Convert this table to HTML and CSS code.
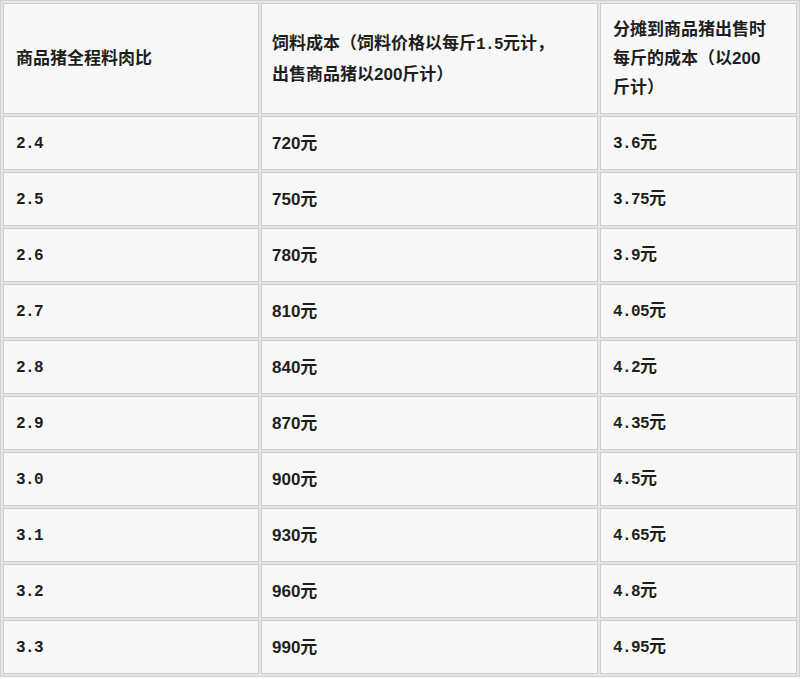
FILE: index.html
```html
<!DOCTYPE html>
<html lang="zh-CN">
<head>
<meta charset="utf-8">
<title>商品猪全程料肉比</title>
<link rel="stylesheet" href="styles.css">
</head>
<body>
<table class="cost-table">
  <colgroup>
    <col class="col-ratio">
    <col class="col-feed">
    <col class="col-unit">
  </colgroup>
  <thead>
    <tr class="head-row">
      <th class="c1">商品猪全程料肉比</th>
      <th class="c2">饲料成本（饲料价格以每斤<span class="num">1.5</span>元计，<br>出售商品猪以200斤计）</th>
      <th class="c3">分摊到商品猪出售时<br>每斤的成本（以200<br>斤计）</th>
    </tr>
  </thead>
  <tbody>
    <tr><td class="c1"><span class="num">2.4</span></td><td class="c2">720元</td><td class="c3"><span class="num">3.6</span>元</td></tr>
    <tr><td class="c1"><span class="num">2.5</span></td><td class="c2">750元</td><td class="c3"><span class="num">3.75</span>元</td></tr>
    <tr><td class="c1"><span class="num">2.6</span></td><td class="c2">780元</td><td class="c3"><span class="num">3.9</span>元</td></tr>
    <tr><td class="c1"><span class="num">2.7</span></td><td class="c2">810元</td><td class="c3"><span class="num">4.05</span>元</td></tr>
    <tr><td class="c1"><span class="num">2.8</span></td><td class="c2">840元</td><td class="c3"><span class="num">4.2</span>元</td></tr>
    <tr><td class="c1"><span class="num">2.9</span></td><td class="c2">870元</td><td class="c3"><span class="num">4.35</span>元</td></tr>
    <tr><td class="c1"><span class="num">3.0</span></td><td class="c2">900元</td><td class="c3"><span class="num">4.5</span>元</td></tr>
    <tr><td class="c1"><span class="num">3.1</span></td><td class="c2">930元</td><td class="c3"><span class="num">4.65</span>元</td></tr>
    <tr><td class="c1"><span class="num">3.2</span></td><td class="c2">960元</td><td class="c3"><span class="num">4.8</span>元</td></tr>
    <tr><td class="c1"><span class="num">3.3</span></td><td class="c2">990元</td><td class="c3"><span class="num">4.95</span>元</td></tr>
  </tbody>
</table>
</body>
</html>
```

FILE: styles.css
```css
html, body {
  margin: 0;
  padding: 0;
  background: #fbfbfb;
}

.cost-table {
  width: 800px;
  table-layout: fixed;
  border-collapse: separate;
  border-spacing: 2px;
  border: 1px solid #d2d2d2;
  background: #e6e6e6;
  font-family: "Liberation Sans", "Noto Sans CJK SC", sans-serif;
  font-size: 17px;
  font-weight: 700;
  color: #1e1e1e;
  box-sizing: border-box;
}

.col-ratio { width: 256px; }
.col-feed { width: 337px; }
.col-unit { width: 197px; }

.cost-table th,
.cost-table td {
  box-sizing: border-box;
  height: 54px;
  padding: 0 8px 0 12px;
  border: 1px solid #cdcdcd;
  background: #f8f8f8;
  text-align: left;
  vertical-align: middle;
  line-height: 29px;
  font-weight: 700;
  white-space: nowrap;
}

.cost-table .head-row th {
  height: 111px;
}

.cost-table .c2 {
  padding-left: 10px;
}

.num {
  font-family: "Liberation Mono", monospace;
  font-size: 16px;
  letter-spacing: -0.6px;
  font-weight: 700;
}
```
